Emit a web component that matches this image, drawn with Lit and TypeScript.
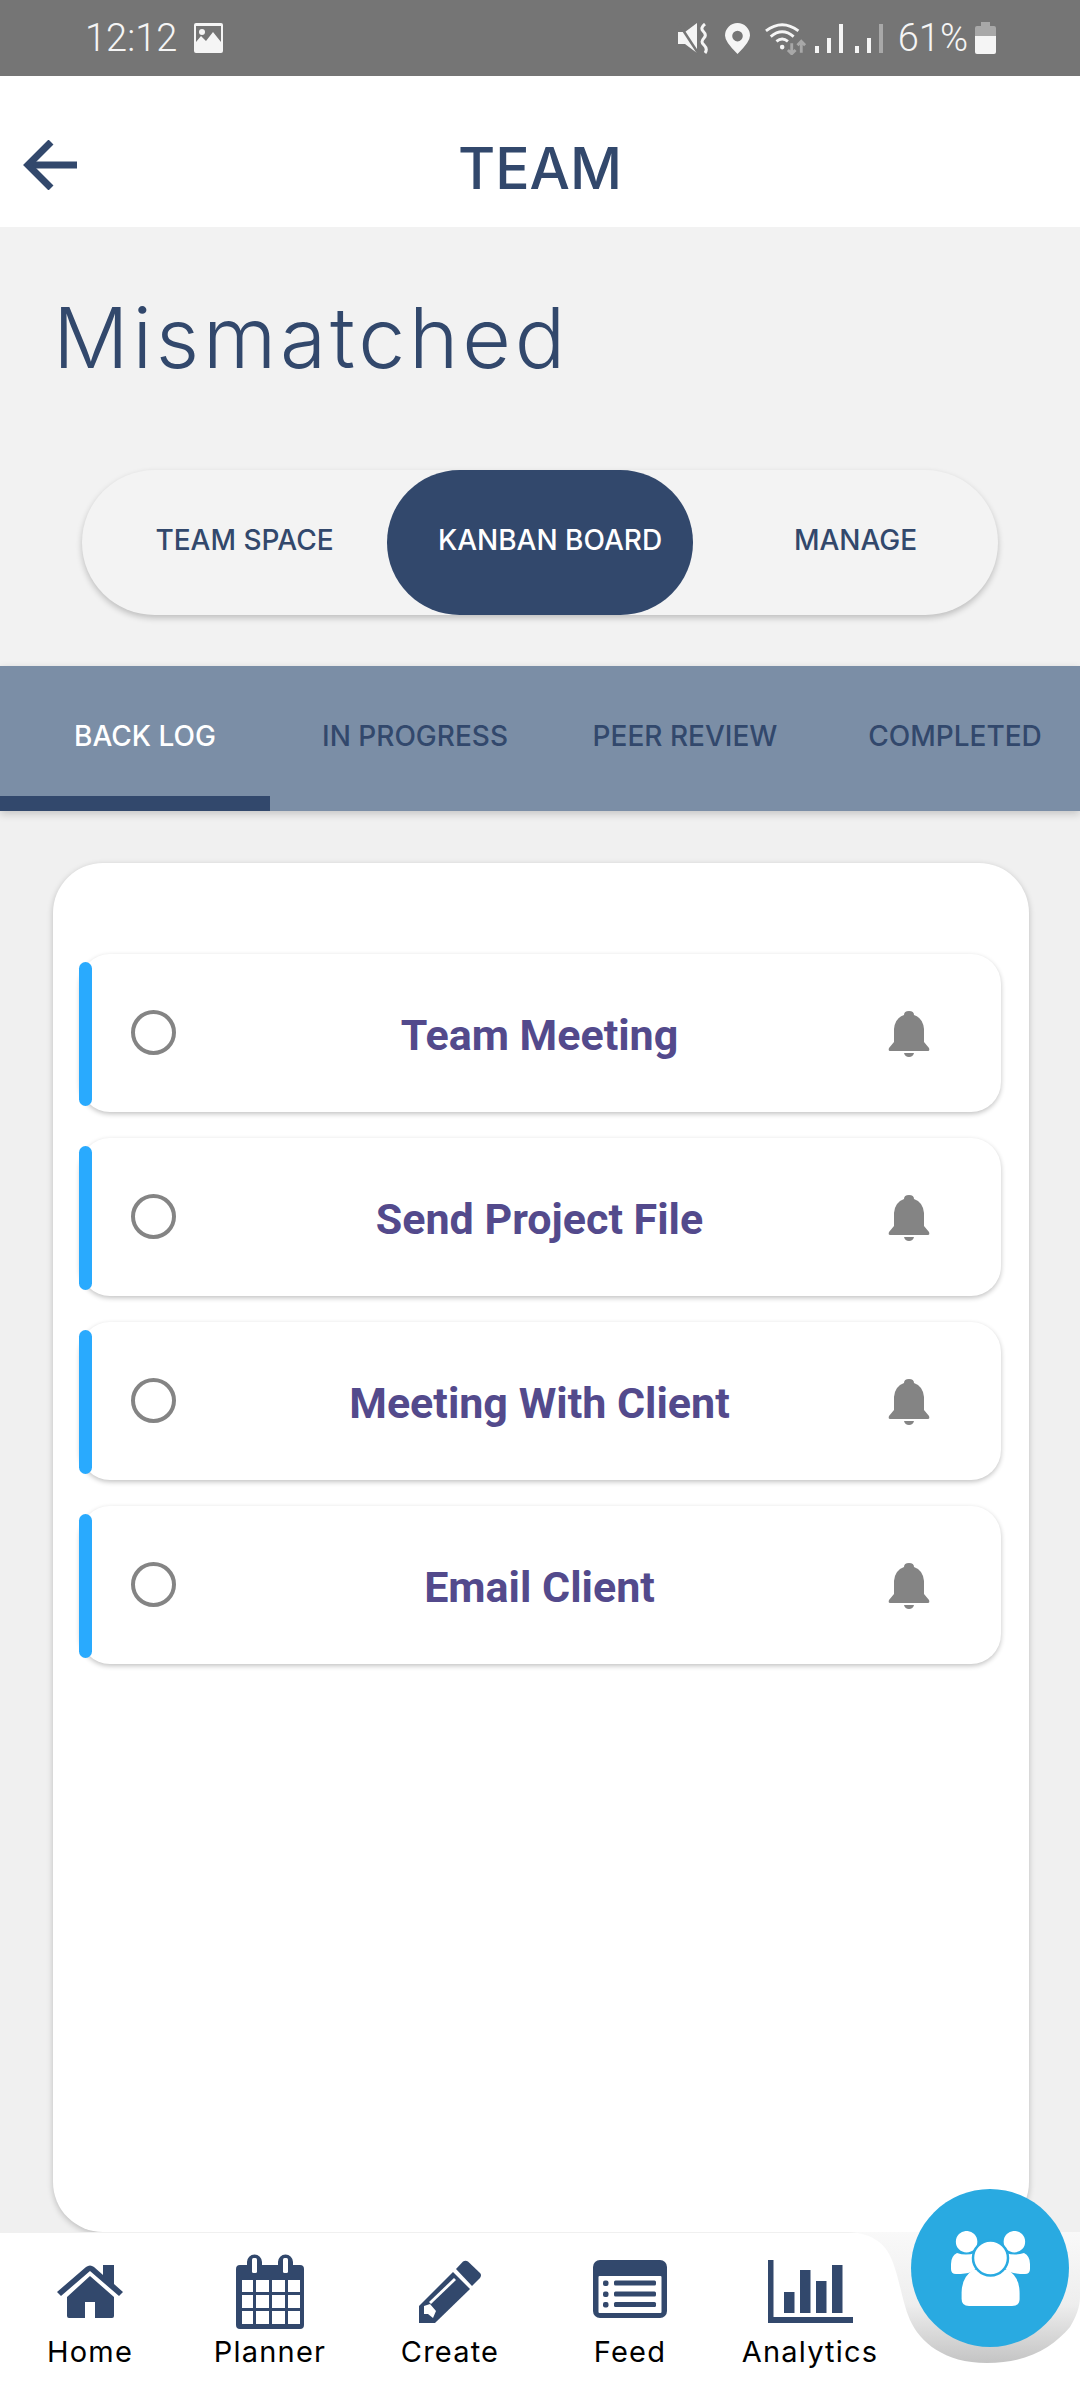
import { LitElement, html, css, svg } from 'lit';
import { customElement } from 'lit/decorators.js';

const NAVY = '#32486c';

const tasks = ['Team Meeting', 'Send Project File', 'Meeting With Client', 'Email Client'];

const plannerCols = [
  [6, 11],
  [20, 13],
  [36, 13],
  [52, 12],
];
const plannerRows = [
  [26, 12],
  [41, 13],
  [57, 13],
];

const navIcons = {
  home: svg`<svg width="66" height="53" viewBox="0 0 66 53" fill="${NAVY}">
    <path d="M0 27 L29 2 Q33 -1 37 2 L46 10 V0 H57 V19 L66 27 L62 31 L33 6 L4 31 Z"/>
    <path d="M10 32 L33 11 L57 32 V51 Q57 53 55 53 H38 V37 H28 V53 H12 Q10 53 10 51 Z"/>
  </svg>`,
  planner: svg`<svg width="68" height="75" viewBox="0 0 68 75">
    <path fill="${NAVY}" d="M4 11 H11 V8 A7.5 7.5 0 0 1 26 8 V11 H42 V8 A7.5 7.5 0 0 1 57 8 V11 H64 Q68 11 68 15 V71 Q68 75 64 75 H4 Q0 75 0 71 V15 Q0 11 4 11 Z"/>
    <rect x="16" y="4" width="5" height="15" rx="1.5" fill="#fff"/>
    <rect x="47" y="4" width="5" height="15" rx="1.5" fill="#fff"/>
    <g fill="#fff">
      ${plannerRows.map(([y, h]) =>
        plannerCols.map(([x, w]) => svg`<rect x="${x}" y="${y}" width="${w}" height="${h}"/>`)
      )}
    </g>
  </svg>`,
  create: svg`<svg width="64" height="63" viewBox="0 0 64 63" fill="${NAVY}">
    <path d="M38 9 L45 1.5 Q47.5 0 50 1.5 L62 13 Q64 15 62 18 L54 26 Z"/>
    <path d="M1 46 L35 12 L52 29 L17 63 H1 Z"/>
    <path d="M11 42 L36 18 L38 20 L13 44 Z" fill="#fff"/>
    <path d="M6 46 L12 44 L18 51 L15 58 L10 54 L6 54 Z" fill="#fff"/>
  </svg>`,
  feed: svg`<svg class="feed" width="74" height="58" viewBox="0 0 74 58">
    <rect width="74" height="58" rx="7" fill="${NAVY}"/>
    <rect x="5.5" y="16" width="63" height="37" rx="1" fill="#fff"/>
    <g fill="${NAVY}">
      <rect x="10" y="20.5" width="5.5" height="5.5" rx="2"/><rect x="21" y="20.5" width="42" height="5" rx="1.5"/>
      <rect x="10" y="31.5" width="5.5" height="5.5" rx="2"/><rect x="21" y="31.5" width="42" height="5" rx="1.5"/>
      <rect x="10" y="42" width="5.5" height="5.5" rx="2"/><rect x="21" y="42" width="42" height="5" rx="1.5"/>
    </g>
  </svg>`,
  analytics: svg`<svg width="85" height="63" viewBox="0 0 85 63" fill="${NAVY}">
    <path d="M0 0 H5.5 V57 H85 V63 H0 Z"/>
    <rect x="16" y="32" width="10.5" height="21"/>
    <rect x="32" y="10" width="10.5" height="43"/>
    <rect x="48" y="21" width="10.5" height="32"/>
    <rect x="64" y="5" width="10.5" height="48"/>
  </svg>`,
};

const navItems = [
  { label: 'Home', icon: navIcons.home },
  { label: 'Planner', icon: navIcons.planner },
  { label: 'Create', icon: navIcons.create },
  { label: 'Feed', icon: navIcons.feed },
  { label: 'Analytics', icon: navIcons.analytics },
];

@customElement('app-root')
export class AppRoot extends LitElement {
  static styles = css`
    :host {
      display: block;
      width: 1080px;
      height: 2400px;
      font-family: 'Inter', 'Open Sans', sans-serif;
      background: linear-gradient(#f2f2f2 666px, #f0f0f0 666px);
      overflow: hidden;
      position: relative;
    }
    .page {
      display: flex;
      flex-direction: column;
      height: 2400px;
    }

    /* status bar */
    .status {
      height: 76px;
      flex: none;
      background: #757575;
      color: #f5f5f5;
      display: flex;
      align-items: center;
      padding: 0 84px 0 85px;
      font-family: 'Roboto', sans-serif;
      font-size: 38px;
      font-weight: 300;
    }
    .status .time {
      margin-right: 17px;
    }
    .status .spacer {
      flex: 1;
    }
    .status svg {
      display: block;
    }
    .status .right {
      display: flex;
      align-items: center;
    }
    .status .pin {
      margin: 0 15px;
    }
    .status .wifi {
      margin-right: 8px;
    }
    .status .sig {
      margin-right: 12px;
    }
    .status .pct {
      margin: 0 7px 0 3px;
    }

    /* header */
    .header {
      height: 151px;
      flex: none;
      box-sizing: border-box;
      padding-top: 34px;
      background: #fff;
      display: flex;
      align-items: center;
      justify-content: center;
      position: relative;
      color: #32486c;
      font-size: 57px;
      font-weight: 500;
    }
    .header .back {
      position: absolute;
      left: 23px;
      top: 64px;
    }

    .title {
      margin: 0;
      padding: 61px 0 0 53px;
      height: 243px;
      box-sizing: border-box;
      flex: none;
      color: #32486c;
      font-size: 84px;
      font-weight: 300;
      line-height: 100px;
      letter-spacing: 3.8px;
    }

    .segment {
      margin: 0 82px;
      height: 145px;
      flex: none;
      border-radius: 73px;
      background: #f3f3f3;
      box-shadow: 0 3px 6px rgba(0, 0, 0, 0.22);
      display: grid;
      grid-template-columns: 305px 306px 305px;
      color: #32486c;
      font-size: 28px;
      font-weight: 500;
    }
    .segment div {
      display: flex;
      align-items: center;
      justify-content: center;
      box-sizing: border-box;
      padding: 0 0 6px 20px;
      border-radius: 73px;
    }
    .segment .on {
      background: #32486c;
      color: #fff;
    }

    .tabs {
      margin-top: 51px;
      height: 145px;
      flex: none;
      background: #7b8ea6;
      box-shadow: 0 3px 8px rgba(0, 0, 0, 0.18);
      display: grid;
      grid-template-columns: repeat(4, 270px);
      color: #32486c;
      font-size: 28px;
      font-weight: 500;
    }
    .tabs div {
      display: flex;
      align-items: center;
      justify-content: center;
      padding: 0 0 6px 20px;
    }
    .tabs .on {
      color: #fff;
      box-shadow: inset 0 -15px 0 #32486c;
    }

    .card {
      margin: 52px 51px 0 53px;
      flex: 1;
      background: #fff;
      border-radius: 50px;
      box-shadow: 0 2px 6px rgba(0, 0, 0, 0.22);
      padding: 91px 28px 0 27px;
      display: flex;
      flex-direction: column;
      gap: 26px;
    }
    .row {
      height: 158px;
      flex: none;
      border-radius: 30px;
      background: #fff;
      box-shadow: 0 2px 5px rgba(0, 0, 0, 0.24);
      display: grid;
      grid-template-columns: 146px 1fr 146px;
      align-items: center;
      position: relative;
    }
    .row::before {
      content: '';
      position: absolute;
      left: -1px;
      top: 8px;
      bottom: 6px;
      width: 13px;
      border-radius: 7px;
      background: #29aafe;
    }
    .check {
      width: 45px;
      height: 45px;
      box-sizing: border-box;
      border: 4px solid #848484;
      border-radius: 50%;
      margin-left: 51px;
      margin-bottom: 1px;
    }
    .name {
      text-align: center;
      padding: 3px 2px 0 0;
      font-family: 'Roboto', sans-serif;
      font-size: 43px;
      font-weight: 700;
      color: #534a8c;
    }
    .bell {
      display: block;
      margin: 2px 0 0 33px;
    }

    .nav {
      height: 168px;
      flex: none;
      background: #fff;
      border-top: 1px solid #f0f0f0;
      box-sizing: border-box;
      display: grid;
      grid-template-columns: repeat(5, 180px);
      padding-top: 21px;
      position: relative;
      z-index: 1;
    }
    .nav .item {
      display: flex;
      flex-direction: column;
      align-items: center;
      color: #000;
      font-size: 29px;
      letter-spacing: 1.2px;
    }
    .nav .icon {
      height: 75px;
      display: flex;
      align-items: center;
      justify-content: center;
    }
    .nav .feed {
      margin-bottom: 5px;
    }
    .nav .label {
      margin-top: 6px;
      line-height: 34px;
    }
    .fab-shadow {
      position: absolute;
      left: 848px;
      top: 2232px;
      z-index: 2;
    }
    .fab {
      position: absolute;
      left: 911px;
      top: 2189px;
      width: 158px;
      height: 158px;
      border-radius: 50%;
      background: #29aae1;
      z-index: 3;
      display: flex;
      align-items: center;
      justify-content: center;
    }
  `;

  render() {
    return html`
      <div class="page">
        <div class="status">
          <span class="time">12:12</span>
          <svg width="29" height="30" viewBox="0 0 29 30">
            <path fill="#f5f5f5" fill-rule="evenodd" d="M2 0 H27 Q29 0 29 2 V28 Q29 30 27 30 H2 Q0 30 0 28 V2 Q0 0 2 0 Z M2 3 V19 L7 13 L12 18 L19 9 L27 19 V3 Z"/>
            <circle cx="8" cy="9" r="3" fill="#f5f5f5"/>
          </svg>
          <span class="spacer"></span>
          <div class="right">
            <svg width="32" height="31" viewBox="0 0 32 31" fill="#f5f5f5">
              <path d="M0 9 H7 L19 0 V30 L7 21 H0 Z"/>
              <path d="M1 1 L20 30" stroke="#757575" stroke-width="2.5"/>
              <path d="M27 1 Q22 5 25 8 Q29 12 26 15 Q22 19 26 22 Q30 26 27 30" fill="none" stroke="#f5f5f5" stroke-width="3"/>
            </svg>
            <svg class="pin" width="25" height="31" viewBox="0 0 26 32">
              <path fill="#f5f5f5" fill-rule="evenodd" d="M13 0 A13 13 0 0 1 26 13 Q26 20 13 32 Q0 20 0 13 A13 13 0 0 1 13 0 Z M13 8 A5.5 5.5 0 1 0 13 19 A5.5 5.5 0 0 0 13 8 Z"/>
            </svg>
            <svg class="wifi" width="42" height="33" viewBox="0 0 44 34" fill="none" stroke="#f5f5f5" stroke-width="3">
              <path d="M1 9 Q18 -4 35 9"/>
              <path d="M6 15 Q18 5 30 15"/>
              <path d="M12 20 Q18 15 24 20"/>
              <circle cx="18" cy="26" r="2.4" fill="#f5f5f5" stroke="none"/>
              <path d="M28 22 V33 M24 29 L28 33 L32 29 M38 32 V20 M34 24 L38 20 L42 24" stroke="#a8a8a8"/>
            </svg>
            <svg class="sig" width="28" height="29" viewBox="0 0 28 29" fill="#f5f5f5">
              <rect x="0" y="22" width="4" height="7"/><rect x="12" y="14" width="4" height="15"/><rect x="24" y="0" width="4" height="29"/>
            </svg>
            <svg class="sig" width="28" height="29" viewBox="0 0 28 29" fill="#f5f5f5">
              <rect x="0" y="22" width="4" height="7"/><rect x="12" y="14" width="4" height="15"/><rect x="24" y="0" width="4" height="29" fill="#a8a8a8"/>
            </svg>
            <span class="pct">61%</span>
            <svg width="21" height="32" viewBox="0 0 21 32">
              <path fill="#a8a8a8" d="M6 0 H15 V4 H19 Q21 4 21 6 V14 H0 V6 Q0 4 2 4 H6 Z"/>
              <path fill="#f5f5f5" d="M0 14 H21 V30 Q21 32 19 32 H2 Q0 32 0 30 Z"/>
            </svg>
          </div>
        </div>

        <div class="header">
          <svg class="back" width="54" height="50" viewBox="0 0 54 50" fill="none" stroke="#32486c" stroke-width="7">
            <path d="M54 25 H4"/>
            <path d="M28 2 L5 25 L28 48"/>
          </svg>
          TEAM
        </div>

        <h1 class="title">Mismatched</h1>

        <div class="segment">
          <div>TEAM SPACE</div>
          <div class="on">KANBAN BOARD</div>
          <div>MANAGE</div>
        </div>

        <div class="tabs">
          <div class="on">BACK LOG</div>
          <div>IN PROGRESS</div>
          <div>PEER REVIEW</div>
          <div>COMPLETED</div>
        </div>

        <div class="card">
          ${tasks.map(
            (t) => html`
              <div class="row">
                <div class="check"></div>
                <div class="name">${t}</div>
                <svg class="bell" width="42" height="46" viewBox="0 0 42 46" fill="#848484">
                  <path d="M21 0 Q26 0 26 4 Q35 7 36 18 V31 L41 37 Q42 40 40 40 H2 Q0 40 1 37 L6 31 V18 Q7 7 16 4 Q16 0 21 0 Z"/>
                  <path d="M16 42 H26 Q25 46 21 46 Q17 46 16 42 Z"/>
                </svg>
              </div>
            `
          )}
        </div>

        <div class="nav">
          ${navItems.map(
            (n) => html`
              <div class="item">
                <div class="icon">${n.icon}</div>
                <div class="label">${n.label}</div>
              </div>
            `
          )}
        </div>
      </div>

      <svg class="fab-shadow" width="232" height="132" viewBox="0 0 232 132">
        <defs>
          <linearGradient id="sh" x1="0" y1="0" x2="0" y2="1">
            <stop offset="0" stop-color="#f9f9f9" />
            <stop offset="0.55" stop-color="#eeeeee" />
            <stop offset="1" stop-color="#c4c4c4" />
          </linearGradient>
        </defs>
        <path fill="url(#sh)" d="M0 0 C20 1 36 8 44 28 C52 48 54 70 62 88 C72 110 96 131 139 131 C180 131 205 115 222 95 C228 85 232 75 232 65 V0 Z" />
      </svg>
      <div class="fab">
        <svg width="79" height="75" viewBox="0 0 79 75" fill="#fff" stroke="#29aae1" stroke-width="0">
          <path d="M0 33 Q0 25 6 22 Q15 25 24 22 L30 35 L20 41 Q15 43 5 43 Q0 43 0 38 Z" />
          <path d="M79 33 Q79 25 73 22 Q64 25 55 22 L49 35 L59 41 Q64 43 74 43 Q79 43 79 38 Z" />
          <circle cx="15.6" cy="10.7" r="11.5" stroke-width="1.5" />
          <circle cx="63.4" cy="10.7" r="11.5" stroke-width="1.5" />
          <path d="M10.6 62 Q10.6 46 22 39 H57 Q68.6 46 68.6 62 V68 Q68.6 75 61 75 H18 Q10.6 75 10.6 68 Z" />
          <circle cx="39.5" cy="27" r="17.5" stroke-width="2.5" />
        </svg>
      </div>
    `;
  }
}
